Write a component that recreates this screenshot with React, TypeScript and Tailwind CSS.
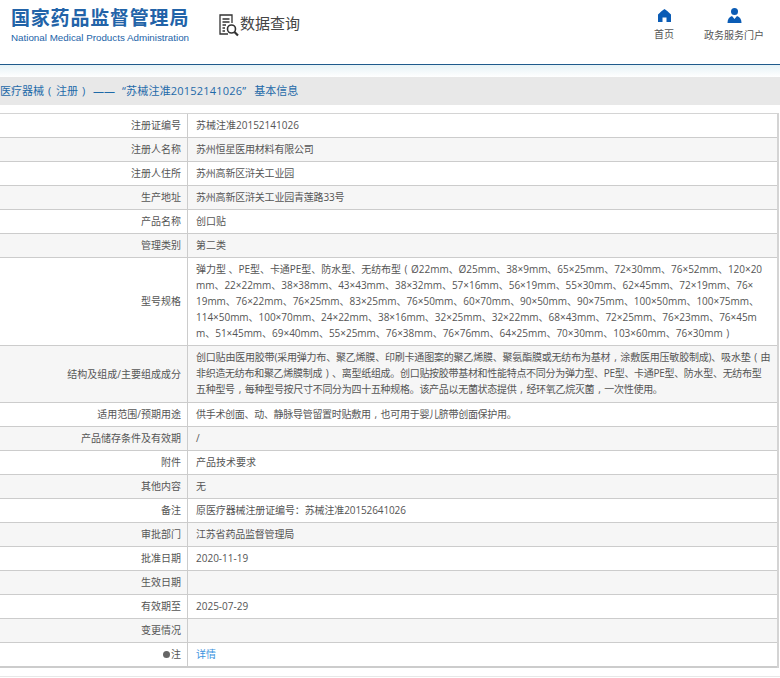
import { Fragment } from "react";

const cjk = "tracking-[-0.2px]";
const tight = "tracking-[-0.3px]";

type Row = { label: string; lines: string[]; height: number; track?: string[] };

const rows: Row[] = [
  { label: "注册证编号", lines: ["苏械注准20152141026"], height: 24 },
  { label: "注册人名称", lines: ["苏州恒星医用材料有限公司"], height: 24, track: [cjk] },
  { label: "注册人住所", lines: ["苏州高新区浒关工业园"], height: 24, track: [cjk] },
  { label: "生产地址", lines: ["苏州高新区浒关工业园青莲路33号"], height: 24, track: [cjk] },
  { label: "产品名称", lines: ["创口贴"], height: 24 },
  { label: "管理类别", lines: ["第二类"], height: 24 },
  {
    label: "型号规格",
    lines: [
      "弹力型 、PE型、卡通PE型、防水型、无纺布型（Ø22mm、Ø25mm、38×9mm、65×25mm、72×30mm、76×52mm、120×20",
      "mm、22×22mm、38×38mm、43×43mm、38×32mm、57×16mm、56×19mm、55×30mm、62×45mm、72×19mm、76×",
      "19mm、76×22mm、76×25mm、83×25mm、76×50mm、60×70mm、90×50mm、90×75mm、100×50mm、100×75mm、",
      "114×50mm、100×70mm、24×22mm、38×16mm、32×25mm、32×22mm、68×43mm、72×25mm、76×23mm、76×45m",
      "m、51×45mm、69×40mm、55×25mm、76×38mm、76×76mm、64×25mm、70×30mm、103×60mm、76×30mm）",
    ],
    height: 88,
    track: ["tracking-[-0.03px]"],
  },
  {
    label: "结构及组成/主要组成成分",
    lines: [
      "创口贴由医用胶带(采用弹力布、聚乙烯膜、印刷卡通图案的聚乙烯膜、聚氨酯膜或无纺布为基材，涂敷医用压敏胶制成)、吸水垫（由",
      "非织造无纺布和聚乙烯膜制成）、离型纸组成。创口贴按胶带基材和性能特点不同分为弹力型、PE型、卡通PE型、防水型、无纺布型",
      "五种型号，每种型号按尺寸不同分为四十五种规格。该产品以无菌状态提供，经环氧乙烷灭菌，一次性使用。",
    ],
    height: 57,
    track: [cjk, tight, tight],
  },
  { label: "适用范围/预期用途", lines: ["供手术创面、动、静脉导管留置时贴敷用，也可用于婴儿脐带创面保护用。"], height: 24, track: [tight] },
  { label: "产品储存条件及有效期", lines: ["/"], height: 24 },
  { label: "附件", lines: ["产品技术要求"], height: 24 },
  { label: "其他内容", lines: ["无"], height: 24 },
  { label: "备注", lines: ["原医疗器械注册证编号：苏械注准20152641026"], height: 24, track: ["tracking-[-0.12px]"] },
  { label: "审批部门", lines: ["江苏省药品监督管理局"], height: 24, track: [cjk] },
  { label: "批准日期", lines: ["2020-11-19"], height: 24 },
  { label: "生效日期", lines: [""], height: 24 },
  { label: "有效期至", lines: ["2025-07-29"], height: 24 },
  { label: "变更情况", lines: [""], height: 24 },
];

const font = { fontFamily: '"Open Sans", "Noto Sans CJK SC", sans-serif' };

// full-width punctuation sits centred in its cell in the reference
const Line = ({ text, className }: { text: string; className?: string }) => (
  <div className={className}>
    {text.split(/([（），])/).map((part, i) =>
      part === "（" || part === "）" || part === "，" ? (
        <span key={i} className="inline-block w-[10px] text-center">
          {part === "（" ? "(" : part === "）" ? ")" : ","}
        </span>
      ) : (
        <Fragment key={i}>{part}</Fragment>
      )
    )}
  </div>
);

export default function App() {
  return (
    <div className="w-[780px] h-[678px] overflow-hidden bg-white text-[10px] text-[#555]" style={font}>
      {/* Header */}
      <header className="h-[65px] flex border-b border-[#1f5a8c]">
        <div className="pl-[11px] pt-[8px] w-[218px] shrink-0" style={{ fontFamily: '"Liberation Sans", "Noto Sans CJK SC", sans-serif' }}>
          <div className="text-[19px] leading-[22px] font-bold text-[#2263a8] tracking-[0.8px] whitespace-nowrap">国家药品监督管理局</div>
          <div className="text-[9.8px] leading-[14px] mt-[1px] text-[#2263a8] whitespace-nowrap">National Medical Products Administration</div>
        </div>
        <div className="flex items-start pt-[13px] pl-[1px]">
          <svg className="mt-[1px]" width="20" height="23" viewBox="0 0 20 23" fill="none" stroke="#333" strokeWidth="1.3">
            <path d="M9 20H1V1h12v8" />
            <path d="M3.500 5h7M3.500 8h7M3.500 11h3.500M3.500 14h2.500M3.500 17h2.500" />
            <circle cx="12.500" cy="15" r="4" strokeWidth="1.6" />
            <path d="M15.500 18l3.500 3.500" strokeWidth="2.200" />
          </svg>
          <span className="text-[15px] leading-[20px] text-[#444] ml-[1px]">数据查询</span>
        </div>
        <nav className="ml-auto flex text-[10px] text-[#555]">
          <div className="flex flex-col items-center pt-[9px] w-[40px]">
            <svg width="13" height="13" viewBox="0 0 13 13" fill="#0b5cb5">
              <path d="M6.500 0C8 .8 11 3.500 13 5.500V13H8.500V8.500h-4V13H0V5.500C2 3.500 5 .8 6.500 0z" />
            </svg>
            <span className="mt-[5px] leading-[14px]">首页</span>
          </div>
          <div className="flex flex-col items-center pt-[8px] w-[60px] ml-[20px] mr-[16px]">
            <svg width="15" height="15" viewBox="0 0 15 15" fill="#0b5cb5">
              <circle cx="7.500" cy="3.500" r="3.500" />
              <path d="M.5 15c0-3.500 1.500-6 4.500-7l2.500 3L10 8c3 1 4.500 3.500 4.500 7z" />
            </svg>
            <span className="mt-[5px] leading-[14px] whitespace-nowrap">政务服务门户</span>
          </div>
        </nav>
      </header>

      {/* Title strip */}
      <div className="h-[12px] bg-gradient-to-b from-[#e6f2f6] to-white" />
      <div className="h-[28px] bg-[#e8e8e8] flex items-center text-[11px] text-[#1e6aa8] whitespace-nowrap">
        医疗器械
        <span className="w-[11px] text-center">(</span>
        <span className="ml-[1px]">注册</span>
        <span className="w-[11px] text-center">)</span>
        <span className="ml-[4px]">——</span>
        <span className="ml-[7px] tracking-[0.2px]">“苏械注准20152141026”</span>
        <span className="ml-[8px]">基本信息</span>
      </div>

      {/* Detail table */}
      <div className="mt-[8px] w-[779px] border-t border-r-2 border-[#d4d4d4] grid grid-cols-[188px_1fr]">
        {rows.map(({ label, lines, height, track }, i) => (
          <Fragment key={label}>
            <div
              className={`flex items-center justify-end pr-[6px] border-b border-r border-[#ccc] ${i % 2 ? "bg-[#f6f6f6]" : "bg-white"}`}
              style={{ height }}
            >
              {label}
            </div>
            <div
              className={`flex flex-col justify-center pl-[8px] pb-[2px] leading-[16px] whitespace-nowrap border-b border-[#ccc] ${i % 2 ? "bg-[#f6f6f6]" : "bg-white"}`}
              style={{ height }}
            >
              {lines.map((line, n) => (
                <Line key={line} text={line} className={track?.[n] ?? track?.[0]} />
              ))}
            </div>
          </Fragment>
        ))}
        <div className="h-[25px] flex items-center justify-end pr-[6px] pb-[1px] border-b-2 border-r border-[#ccc]">
          <span className="w-[7px] h-[7px] rounded-full bg-[#666] mr-[1px]" />注
        </div>
        <div className="h-[25px] flex items-center pl-[8px] border-b-2 border-[#ccc] text-[#3b93e0]">详情</div>
      </div>
      <div className="mt-[8px] border-t border-[#e8e8e8]" />
    </div>
  );
}
